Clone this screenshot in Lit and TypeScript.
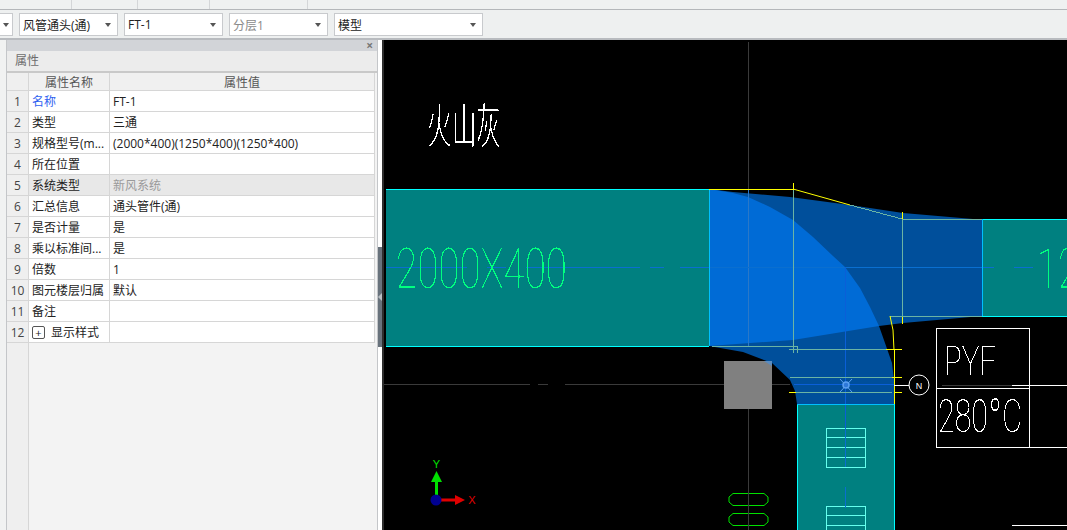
import { LitElement, html, css, svg } from 'lit';
import { customElement } from 'lit/decorators.js';

interface Row {
    name: string;
    value?: string;
    link?: boolean;
    disabled?: boolean;
    expand?: boolean;
}

const ROWS: Row[] = [
    { name: '名称', value: 'FT-1', link: true },
    { name: '类型', value: '三通' },
    { name: '规格型号(m...', value: '(2000*400)(1250*400)(1250*400)' },
    { name: '所在位置' },
    { name: '系统类型', value: '新风系统', disabled: true },
    { name: '汇总信息', value: '通头管件(通)' },
    { name: '是否计量', value: '是' },
    { name: '乘以标准间...', value: '是' },
    { name: '倍数', value: '1' },
    { name: '图元楼层归属', value: '默认' },
    { name: '备注' },
    { name: '显示样式', expand: true },
];

const SELECTS = [
    { label: '', width: 13, cut: true },
    { label: '风管通头(通)', width: 99 },
    { label: 'FT-1', width: 99 },
    { label: '分层1', width: 99, muted: true },
    { label: '模型', width: 149 },
];

@customElement('app-root')
export class AppRoot extends LitElement {
    static styles = css`
        :host {
            display: block;
            width: 1067px;
            height: 530px;
            overflow: hidden;
            font-family: 'Open Sans', 'Noto Sans CJK SC', sans-serif;
            font-size: 12px;
            color: #222;
            background: #eef0f0;
        }

        .tabs {
            display: flex;
            height: 9px;
            background: #eff1f1;
            border-bottom: 1px solid #b4b7ba;
        }

        .tabs span {
            border-right: 1px solid #d4d6d8;
        }

        .toolbar {
            display: flex;
            gap: 6px;
            height: 30px;
            padding-top: 3px;
            box-sizing: border-box;
            background: #eef0f0;
            border-bottom: 2px solid #b8bbbf;
        }

        .select {
            display: flex;
            align-items: center;
            box-sizing: border-box;
            height: 23px;
            padding: 0 3px;
            background: #fff;
            border: 1px solid #c8cacd;
            white-space: nowrap;
            font-size: 12px;
        }

        .select.cut {
            border-left: none;
        }

        .select.muted {
            color: #8a8a8a;
        }

        .select i {
            margin-left: auto;
            margin-right: 3px;
            border-left: 3.5px solid transparent;
            border-right: 3.5px solid transparent;
            border-top: 4px solid #555;
        }

        .main {
            display: flex;
            height: 490px;
        }

        .strip {
            width: 7px;
            background: #f1f2f2;
            border-right: 1px solid #c4c6c9;
            box-sizing: border-box;
        }

        .panel {
            display: flex;
            flex-direction: column;
            width: 371px;
            background: #f3f3f3;
            border-right: 1px solid #c4c6c9;
            box-sizing: border-box;
        }

        .panel-bar {
            display: flex;
            align-items: center;
            justify-content: flex-end;
            height: 11px;
            padding-right: 4px;
            background: #d2d4d8;
            color: #777;
            font-size: 12px;
            font-weight: 700;
            line-height: 11px;
            flex: none;
        }

        .panel-title {
            flex: none;
            height: 20px;
            padding-left: 8px;
            line-height: 20px;
            font-size: 12px;
            color: #6c6c6c;
            background: #ececec;
            border-bottom: 2px solid #c9c9c9;
        }

        .grid {
            display: grid;
            grid-template-columns: 22px 81px 1fr;
            grid-template-rows: 18px;
            grid-auto-rows: 21px;
            margin-right: 2px;
        }

        .cell {
            display: flex;
            align-items: center;
            box-sizing: border-box;
            padding-left: 3px;
            background: #fff;
            border-right: 1px solid #d6d6d6;
            border-bottom: 1px solid #d6d6d6;
            white-space: nowrap;
            overflow: hidden;
        }

        .head {
            justify-content: center;
            background: #f0f0f0;
            color: #555;
            padding-left: 0;
        }

        .num {
            justify-content: center;
            padding-left: 0;
            background: #efefef;
            color: #444;
        }

        .link {
            color: #2f62f0;
        }

        .off {
            background: #e8e8e8;
        }

        .off.val {
            color: #9a9a9a;
        }

        .plus {
            display: flex;
            align-items: center;
            justify-content: center;
            box-sizing: border-box;
            width: 13px;
            height: 13px;
            margin-right: 6px;
            border: 1px solid #555;
            border-radius: 2px;
            font-size: 11px;
            line-height: 1;
        }

        .rest {
            display: flex;
            flex: 1;
        }

        .rest span {
            width: 22px;
            box-sizing: border-box;
            background: #efefef;
            border-right: 1px solid #d6d6d6;
        }

        .splitter {
            position: relative;
            width: 6px;
            background: #fff;
            border-right: 2px solid #2e2e2e;
            box-sizing: border-box;
        }

        .handle {
            position: absolute;
            left: 0;
            top: 207px;
            width: 4px;
            height: 100px;
            background: #68727c;
        }

        .handle::after {
            content: '';
            position: absolute;
            left: 0;
            top: 46px;
            border-top: 4px solid transparent;
            border-bottom: 4px solid transparent;
            border-right: 4px solid #b9bfc4;
        }

        .canvas {
            flex: 1;
            background: #000;
        }

        .canvas svg {
            display: block;
        }

        .labels {
            filter: url(#alias);
        }

        .cad {
            font-family: 'Roboto', 'Liberation Sans', sans-serif;
            font-weight: 100;
        }

        .cjk {
            font-family: 'Noto Sans CJK SC', sans-serif;
            font-weight: 100;
            filter: url(#alias-soft);
        }
    `;

    private renderDuct() {
        // coordinates are page pixels, the viewBox starts where the canvas starts
        return svg`
            <g shape-rendering="crispEdges">
                <rect x="386" y="189" width="323" height="157" fill="#008080"/>
                <rect x="982" y="219" width="85" height="97" fill="#008080"/>
                <rect x="797" y="404" width="97" height="126" fill="#008080"/>
            </g>
            <path d="M709 189 L733 192 L790 197 L850 205 L903 213 L973 219 L982 219 L982 316 L903 323 L879 326
                L885 343 L892 363 L894 380 L894 404 L797 404 L795 391 L790 380 L772 363 L743 352 L709 346 Z" fill="#004f9b"/>
            <path d="M709 189 L733 193 L748 197 L770 207 L793 220 L813 237 L833 256 L845 267 L860 288 L870 307
                L879 326 L793 340 L709 346 Z" fill="#006bd6"/>
        `;
    }

    private renderLines() {
        return svg`
            <g shape-rendering="crispEdges" fill="none" stroke-width="1">
                <path d="M748.5 42V189 M748.5 409V530 M384 384.5H530 M538 384.5H548 M565 384.5H724 M772 384.5H790" stroke="#3a3a3a"/>
                <path d="M748.5 189V346" stroke="#2a78c8"/>
                <path d="M386 267.5H467 M487 267.5H506 M526 267.5H640 M650 267.5H664 M680 267.5H994 M1014 267.5H1033"
                    stroke="#0a6fd0"/>
                <path d="M845.5 267V428 M845.5 450V467 M845.5 487V508 M794 384.5H894" stroke="#0a5fd8"/>
                <path d="M386 189.5H709 M982 219.5H1067 M386 346.5H709 M982 316.5H1067 M797.5 404V530 M894.5 404V530" stroke="#00ffff"/>
                <path d="M709.500 189V346 M982.500 219V316 M797 404.500H894" stroke="#00bfff"/>
                <path d="M793.500 183V190 M709 189.500H793 M902.500 212V219 M902.500 316V324" stroke="#ffff00"/>
                <path d="M793.500 190V353 M902.500 219V316 M850 205 L902 219 M902 219.500H982 M890 316.500H982 M712 346.500H797.500V353
                    M789 349.500H886 M790 377.500H892 M796 392.500H892" stroke="#6cb4a4"/>
                <path d="M886 349.500H902 M892 377.500H902 M894 392.500H902 M789 392.500H796 M894.500 350V404" stroke="#ffff00"/>
            </g>
            <path d="M793 189 L850 205 M890 316 L893 330 L894 350" fill="none" stroke="#ffff00" stroke-width="1"/>
            <rect x="724" y="361" width="48" height="48" fill="#808080" shape-rendering="crispEdges"/>
            <path d="M764 361 H772 V366 Z" fill="#5b8cc0"/>
            <path d="M840 379 L852 392 M852 379 L840 392" stroke="#5aa0f0" stroke-width="1" fill="none"/>
            <circle cx="846" cy="385" r="3" fill="#2d78d8" stroke="#5aa0f0" stroke-width="1.500"/>
        `;
    }

    private renderSymbols() {
        return svg`
            <g fill="none" stroke="#fff" stroke-width="1" shape-rendering="crispEdges">
                <rect x="936.500" y="328.500" width="93" height="119"/>
                <path d="M936 388.500H1029 M1012 385.500H1067 M1029 447.500H1067 M1012 525.500H1067 M894 385.500H909"/>
            </g>
            <path d="M942 385.500H1012" stroke="#3a3a3a" shape-rendering="crispEdges"/>
            <circle cx="919" cy="385" r="10" fill="#000" stroke="#fff"/>
            <text x="919" y="388.500" font-size="9" text-anchor="middle" fill="#fff" font-family="Liberation Sans">N</text>

            <g fill="none" stroke="#66ffee" shape-rendering="crispEdges">
                <rect x="826.500" y="428.500" width="39" height="39"/>
                <path d="M826 437.500H865 M826 447.500H865 M826 457.500H865"/>
                <rect x="826.500" y="506.500" width="39" height="39"/>
                <path d="M826 515.500H865 M826 525.500H865"/>
            </g>
            <path d="M845.500 428V467 M845.500 487V508" stroke="#0a6fd0" shape-rendering="crispEdges"/>

            <g fill="none" stroke="#00e000">
                <path d="M733 493.500H764L768 497V502L764 505.500H733L729 502V497Z"/>
                <path d="M733 513.500H764L768 517V522L764 525.500H733L729 522V517Z"/>
            </g>
            <path d="M748.500 493V506 M748.500 513V526" stroke="#3a3a3a" shape-rendering="crispEdges"/>

            <rect x="435" y="480" width="3" height="16" fill="#00e000"/>
            <path d="M436.500 471 L431 482 H442 Z" fill="#00e000"/>
            <rect x="441" y="498.500" width="15" height="3" fill="#e00000"/>
            <path d="M455 495 L465 500 L455 505 Z" fill="#e00000"/>
            <circle cx="436" cy="500" r="5.500" fill="#000090"/>
            <text x="436.500" y="468" font-size="11" text-anchor="middle" fill="#00e000" font-family="Liberation Sans">Y</text>
            <text x="472" y="504" font-size="11" text-anchor="middle" fill="#e00000" font-family="Liberation Sans">X</text>
        `;
    }

    private renderLabels() {
        // the filters harden the edges, CAD text in the reference has no smoothing
        return svg`
            <filter id="alias" x="0" y="0" width="100%" height="100%" color-interpolation-filters="sRGB">
                <feComponentTransfer>
                    <feFuncA type="discrete" tableValues="0 0 1 1"/>
                </feComponentTransfer>
            </filter>
            <filter id="alias-soft" x="0" y="0" width="100%" height="100%" color-interpolation-filters="sRGB">
                <feComponentTransfer>
                    <feFuncA type="discrete" tableValues="0 0 0 1 1 1 1 1 1 1"/>
                </feComponentTransfer>
            </filter>
            <g class="labels">
                <text class="cad" x="396" y="288" font-size="56" textLength="171" lengthAdjust="spacingAndGlyphs"
                    fill="#00ff80">2000X400</text>
                <text class="cad" x="1037" y="288" font-size="56" textLength="42" lengthAdjust="spacingAndGlyphs"
                    fill="#00ff80">12</text>
                <text class="cad" x="944" y="375" font-size="40" textLength="52" lengthAdjust="spacingAndGlyphs"
                    fill="#fff">PYF</text>
                <text class="cad" x="938" y="432" font-size="46" textLength="84" lengthAdjust="spacingAndGlyphs"
                    fill="#fff">280<tspan font-size="56" dy="6">°</tspan><tspan dy="-6">C</tspan></text>
            </g>
            <text class="cjk" x="427" y="143" font-size="48" textLength="74" lengthAdjust="spacingAndGlyphs"
                fill="#fff">火山灰</text>
        `;
    }

    render() {
        return html`
            <div class="tabs">
                <span style="width:71px"></span>
                <span style="width:65px"></span>
                <span style="width:71px"></span>
                <span style="width:97px"></span>
            </div>
            <div class="toolbar">
                ${SELECTS.map(
                    (s) => html`
                        <div class="select ${s.cut ? 'cut' : ''} ${s.muted ? 'muted' : ''}" style="width:${s.width}px">
                            ${s.label}<i></i>
                        </div>
                    `
                )}
            </div>
            <div class="main">
                <div class="strip"></div>
                <div class="panel">
                    <div class="panel-bar">×</div>
                    <div class="panel-title">属性</div>
                    <div class="grid">
                        <div class="cell head num"></div>
                        <div class="cell head">属性名称</div>
                        <div class="cell head">属性值</div>
                        ${ROWS.map(
                            (r, i) => html`
                                <div class="cell num">${i + 1}</div>
                                <div class="cell ${r.link ? 'link' : ''} ${r.disabled ? 'off' : ''}">
                                    ${r.expand ? html`<span class="plus">+</span>` : ''}${r.name}
                                </div>
                                <div class="cell val ${r.disabled ? 'off' : ''}">${r.value ?? ''}</div>
                            `
                        )}
                    </div>
                    <div class="rest"><span></span></div>
                </div>
                <div class="splitter"><div class="handle"></div></div>
                <div class="canvas">
                    <svg width="683" height="490" viewBox="384 40 683 490">
                        ${this.renderDuct()}
                        ${this.renderLines()}
                        ${this.renderSymbols()}
                        ${this.renderLabels()}
                    </svg>
                </div>
            </div>
        `;
    }
}

declare global {
    interface HTMLElementTagNameMap {
        'app-root': AppRoot;
    }
}
